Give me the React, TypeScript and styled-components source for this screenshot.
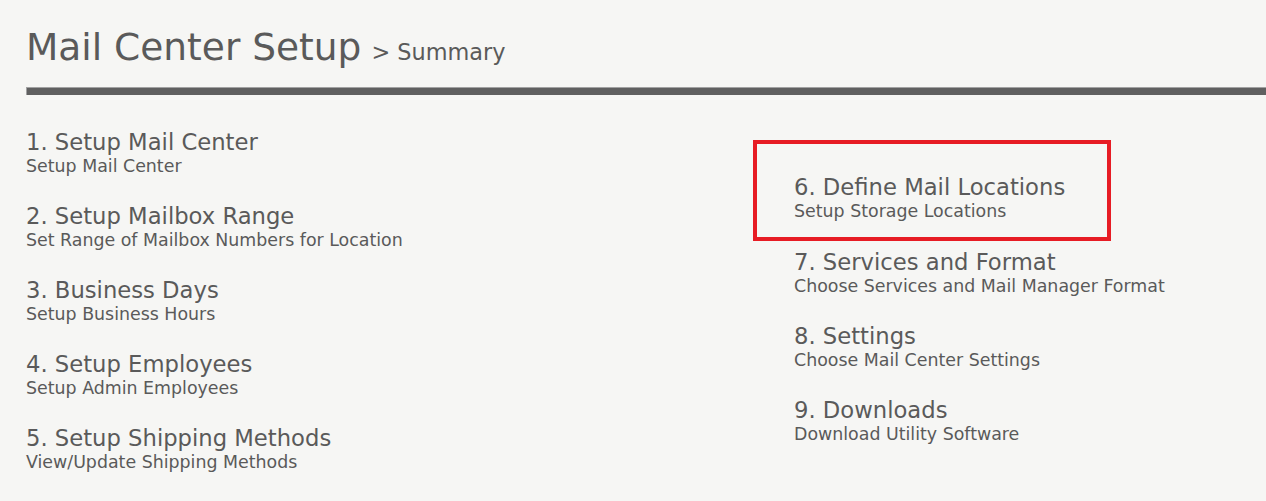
import styled, { createGlobalStyle } from "styled-components";

const GlobalStyle = createGlobalStyle`
  html, body {
    margin: 0;
    background: #f6f6f4;
  }
  body {
    font-family: "DejaVu Sans", Verdana, sans-serif;
    color: #5a5a5a;
  }
`;

const leftSteps = [
  { title: "1. Setup Mail Center", sub: "Setup Mail Center" },
  { title: "2. Setup Mailbox Range", sub: "Set Range of Mailbox Numbers for Location" },
  { title: "3. Business Days", sub: "Setup Business Hours" },
  { title: "4. Setup Employees", sub: "Setup Admin Employees" },
  { title: "5. Setup Shipping Methods", sub: "View/Update Shipping Methods" },
];

const rightSteps = [
  { title: "7. Services and Format", sub: "Choose Services and Mail Manager Format" },
  { title: "8. Settings", sub: "Choose Mail Center Settings" },
  { title: "9. Downloads", sub: "Download Utility Software" },
];

function Step({ title, sub }: { title: string; sub: string }) {
  return (
    <StepItem>
      <StepTitle>{title}</StepTitle>
      <StepSub>{sub}</StepSub>
    </StepItem>
  );
}

function App() {
  return (
    <Page>
      <GlobalStyle />
      <Header>
        <Title>Mail Center Setup</Title>
        <Crumb>&gt; Summary</Crumb>
      </Header>
      <Rule />
      <Columns>
        <Column>
          {leftSteps.map((s) => (
            <Step key={s.title} {...s} />
          ))}
        </Column>
        <RightColumn>
          <Highlight>
            <Step title="6. Define Mail Locations" sub="Setup Storage Locations" />
          </Highlight>
          {rightSteps.map((s) => (
            <Indented key={s.title}>
              <Step {...s} />
            </Indented>
          ))}
        </RightColumn>
      </Columns>
    </Page>
  );
}
export default App;

const Page = styled.div`
  padding: 25px 0 0 26px;
  min-height: 501px;
  box-sizing: border-box;
`;

const Header = styled.div`
  display: flex;
  align-items: baseline;
  gap: 10px;
  line-height: 44px;
`;

const Title = styled.h1`
  margin: 0;
  font-size: 37.5px;
  font-weight: normal;
  color: #5a5a5a;
`;

const Crumb = styled.span`
  font-size: 22.4px;
  color: #5a5a5a;
`;

const Rule = styled.div`
  margin-top: 13px;
  height: 8px;
  box-sizing: border-box;
  background: #606060;
  border-top: 1px solid #a2a2a2;
  border-left: 1px solid #a2a2a2;
`;

const Columns = styled.div`
  display: grid;
  grid-template-columns: 727px 358px;
`;

const Column = styled.div`
  display: flex;
  flex-direction: column;
  gap: 27px;
  padding-top: 34px;
`;

const RightColumn = styled.div`
  display: flex;
  flex-direction: column;
  gap: 27px;
  padding-top: 45px;
`;

const Highlight = styled.div`
  border: 4px solid #e71c24;
  padding: 30px 0 16px 37px;
  margin-bottom: -19px;
`;

const Indented = styled.div`
  padding-left: 41px;
`;

const StepItem = styled.div`
  display: flex;
  flex-direction: column;
`;

const StepTitle = styled.div`
  font-size: 22.7px;
  line-height: 27px;
  white-space: nowrap;
`;

const StepSub = styled.div`
  font-size: 17.4px;
  line-height: 20px;
  white-space: nowrap;
`;
